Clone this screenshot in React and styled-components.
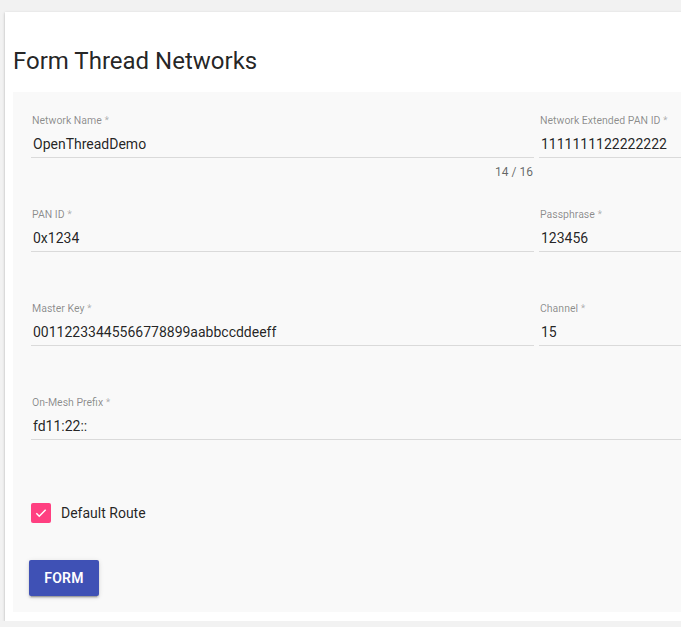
import React from 'react';
import styled, { createGlobalStyle } from 'styled-components';

const GlobalStyle = createGlobalStyle`
  html, body {
    margin: 0;
    padding: 0;
    background: #f2f2f2;
    overflow: hidden;
    font-family: Roboto, "Noto Sans", sans-serif;
  }
`;

const Page = styled.div`
  padding: 12px 0 0 5px;
  width: 1100px;
`;

const Card = styled.div`
  background: #fff;
  padding: 0 0 9px 8px;
  box-shadow: 0 1px 3px rgba(0, 0, 0, 0.2), 0 1px 1px rgba(0, 0, 0, 0.14), 0 2px 1px -1px rgba(0, 0, 0, 0.12);
`;

const Title = styled.h2`
  margin: 0;
  padding: 33px 0 0 0;
  height: 47px;
  font-size: 24px;
  font-weight: 400;
  line-height: 32px;
  color: rgba(0, 0, 0, 0.87);
`;

const Panel = styled.div`
  background: #f9f9f9;
  padding: 22px 0 16px 18px;
`;

const Grid = styled.div`
  display: grid;
  grid-template-columns: 503px 503px;
  column-gap: 5px;
  row-gap: 27px;
`;

const Field = styled.div`
  display: flex;
  flex-direction: column;
  grid-column: ${({ wide }) => (wide ? '1 / -1' : 'auto')};
`;

const Label = styled.label`
  font-size: 10.5px;
  line-height: 14px;
  color: rgba(0, 0, 0, 0.45);
  padding-left: 1px;

  span {
    color: rgba(0, 0, 0, 0.3);
  }
`;

const Input = styled.input`
  font-family: Roboto, "Noto Sans", sans-serif;
  font-size: 14px;
  line-height: 20px;
  height: 28px;
  padding: 4px 0 4px 2px;
  box-sizing: border-box;
  border: none;
  border-bottom: 1px solid rgba(0, 0, 0, 0.12);
  background: transparent;
  color: rgba(0, 0, 0, 0.87);
  outline: none;
  width: 100%;
  margin-top: 2px;
`;

const Helper = styled.div`
  height: 23px;
  font-size: 12px;
  line-height: 16px;
  padding-top: 6px;
  box-sizing: border-box;
  text-align: right;
  color: rgba(0, 0, 0, 0.6);
  padding-right: 1px;
`;

const CheckRow = styled.label`
  display: flex;
  align-items: center;
  gap: 10px;
  margin-top: 38px;
  height: 24px;
  font-size: 14px;
  color: rgba(0, 0, 0, 0.87);
  cursor: pointer;
`;

const Box = styled.span`
  width: 20px;
  height: 20px;
  border-radius: 2px;
  background: ${({ checked }) => (checked ? '#ff4081' : 'transparent')};
  display: flex;
  align-items: center;
  justify-content: center;
`;

const Button = styled.button`
  margin: 35px 0 0 -2px;
  width: 70px;
  height: 36px;
  border: none;
  border-radius: 2px;
  background: #3f51b5;
  color: #fff;
  font-family: Roboto, "Noto Sans", sans-serif;
  font-size: 14px;
  font-weight: 600;
  letter-spacing: 0.2px;
  box-shadow: 0 3px 1px -2px rgba(0, 0, 0, 0.2), 0 2px 2px 0 rgba(0, 0, 0, 0.14), 0 1px 5px 0 rgba(0, 0, 0, 0.12);
  cursor: pointer;
`;

const fields = [
  { label: 'Network Name', value: 'OpenThreadDemo', helper: '14 / 16' },
  { label: 'Network Extended PAN ID', value: '1111111122222222' },
  { label: 'PAN ID', value: '0x1234' },
  { label: 'Passphrase', value: '123456' },
  { label: 'Master Key', value: '00112233445566778899aabbccddeeff' },
  { label: 'Channel', value: '15' },
  { label: 'On-Mesh Prefix', value: 'fd11:22::', wide: true },
];

const App = () => (
  <>
    <GlobalStyle />
    <Page>
      <Card>
        <Title>Form Thread Networks</Title>
        <Panel>
          <Grid>
            {fields.map((f) => (
              <Field key={f.label} wide={f.wide}>
                <Label>{f.label} <span>*</span></Label>
                <Input defaultValue={f.value} />
                <Helper>{f.helper}</Helper>
              </Field>
            ))}
          </Grid>
          <CheckRow>
            <Box checked>
              <svg width="14" height="14" viewBox="0 0 24 24">
                <path d="M4 12.5l5 5L20 6.5" fill="none" stroke="#fff" strokeWidth="2.6" />
              </svg>
            </Box>
            Default Route
          </CheckRow>
          <Button>FORM</Button>
        </Panel>
      </Card>
    </Page>
  </>
);

export default App;
